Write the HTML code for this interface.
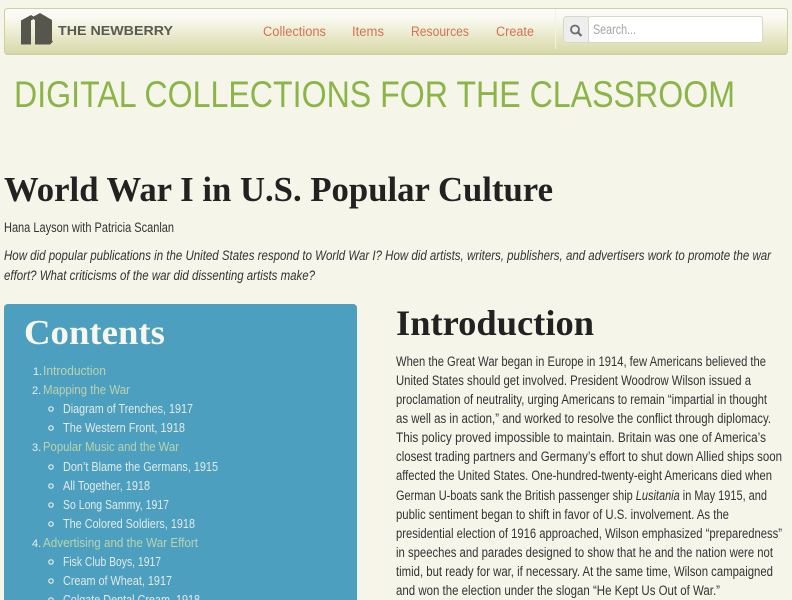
<!DOCTYPE html>
<html><head><meta charset="utf-8"><title>World War I in U.S. Popular Culture</title>
<style>
html,body{margin:0;padding:0;background:#f5f5ea;width:792px;height:600px;overflow:hidden}
svg{position:absolute;left:0;top:0;display:block}
text{font-family:"Liberation Sans",sans-serif;white-space:pre}
.b{font-size:13.5px;fill:#333}
.h{font-family:"Liberation Serif",serif;font-weight:bold}
.n{font-size:13.5px;fill:#d9714e}
.l{font-size:13px;fill:#bcd3ae}
.s{font-size:13px;fill:#e2ebe8}
.o{font-size:11px;fill:#e6eee8}
circle.u{fill:none;stroke:#e6eee8;stroke-width:1.2}
</style></head><body>
<svg width="792" height="600" viewBox="0 0 792 600">
<defs><linearGradient id="g" x1="0" y1="0" x2="0" y2="1"><stop offset="0" stop-color="#fdfdfa"/><stop offset=".2" stop-color="#fafaf2"/><stop offset="1" stop-color="#d8d8a6"/></linearGradient></defs>
<rect x="4.5" y="9" width="783" height="46" rx="3" fill="#c9c9b4"/>
<rect x="4.5" y="8.5" width="783" height="45.500" rx="3" fill="url(#g)" stroke="#cfd0a0"/>
<rect x="555" y="9" width="1" height="40" fill="#f3f3e2"/>
<path d="M21 20.500L31 15V44.500H21ZM31 15L33.500 16.500L40 13L52 20V40.500L53 41.500L50 44.500H35V20.500L33.500 19L31 20.500Z" fill="#57564d"/>
<text x="58" y="35" textLength="115" lengthAdjust="spacingAndGlyphs" style="font-size:13px;font-weight:bold;fill:#5a5a50">THE NEWBERRY</text>
<text class="n" x="263" y="36" textLength="63" lengthAdjust="spacingAndGlyphs">Collections</text>
<text class="n" x="352" y="36" textLength="32" lengthAdjust="spacingAndGlyphs">Items</text>
<text class="n" x="411" y="36" textLength="58" lengthAdjust="spacingAndGlyphs">Resources</text>
<text class="n" x="496" y="36" textLength="38" lengthAdjust="spacingAndGlyphs">Create</text>
<rect x="563.500" y="16.500" width="26" height="26" rx="3" fill="#eeeeee" stroke="#d8d8c8"/>
<rect x="588.500" y="16.500" width="174" height="26" rx="2" fill="#fff" stroke="#d8d8c8"/>
<circle cx="575" cy="29.500" r="4" fill="none" stroke="#6b6b6b" stroke-width="1.800"/>
<path d="M578 32.500L581.500 36" stroke="#6b6b6b" stroke-width="2.200" fill="none"/>
<text x="593" y="34" textLength="43" lengthAdjust="spacingAndGlyphs" style="font-size:13.500px;fill:#a5a5a5">Search...</text>

<text x="14" y="107" textLength="721" lengthAdjust="spacingAndGlyphs" style="font-size:37px;fill:#8cb548">DIGITAL COLLECTIONS FOR THE CLASSROOM</text>

<text class="h" x="4" y="201" textLength="549" lengthAdjust="spacingAndGlyphs" style="font-size:35px;fill:#222">World War I in U.S. Popular Culture</text>
<text class="b" x="4" y="232" textLength="170" lengthAdjust="spacingAndGlyphs">Hana Layson with Patricia Scanlan</text>
<text class="b" x="4" y="260" textLength="767" lengthAdjust="spacingAndGlyphs" font-style="italic">How did popular publications in the United States respond to World War I? How did artists, writers, publishers, and advertisers work to promote the war</text>
<text class="b" x="4" y="280" textLength="311" lengthAdjust="spacingAndGlyphs" font-style="italic">effort? What criticisms of the war did dissenting artists make?</text>

<rect x="4" y="304" width="353" height="300" rx="4" fill="#4c9fbe"/>
<text class="h" x="24" y="344" textLength="141" lengthAdjust="spacingAndGlyphs" style="font-size:35px;fill:#f7f7ee">Contents</text>
<text class="o" x="33" y="375">1.</text><text class="l" x="43" y="375" textLength="63" lengthAdjust="spacingAndGlyphs">Introduction</text>
<text class="o" x="32" y="394">2.</text><text class="l" x="43" y="394" textLength="87" lengthAdjust="spacingAndGlyphs">Mapping the War</text>
<circle class="u" cx="51" cy="409" r="2.200"/><text class="s" x="63" y="413" textLength="130" lengthAdjust="spacingAndGlyphs">Diagram of Trenches, 1917</text>
<circle class="u" cx="51" cy="428" r="2.200"/><text class="s" x="63" y="432" textLength="122" lengthAdjust="spacingAndGlyphs">The Western Front, 1918</text>
<text class="o" x="32" y="451">3.</text><text class="l" x="43" y="451" textLength="136" lengthAdjust="spacingAndGlyphs">Popular Music and the War</text>
<circle class="u" cx="51" cy="467" r="2.200"/><text class="s" x="63" y="471" textLength="155" lengthAdjust="spacingAndGlyphs">Don’t Blame the Germans, 1915</text>
<circle class="u" cx="51" cy="486" r="2.200"/><text class="s" x="63" y="490" textLength="87" lengthAdjust="spacingAndGlyphs">All Together, 1918</text>
<circle class="u" cx="51" cy="505" r="2.200"/><text class="s" x="63" y="509" textLength="106" lengthAdjust="spacingAndGlyphs">So Long Sammy, 1917</text>
<circle class="u" cx="51" cy="524" r="2.200"/><text class="s" x="63" y="528" textLength="132" lengthAdjust="spacingAndGlyphs">The Colored Soldiers, 1918</text>
<text class="o" x="32" y="547">4.</text><text class="l" x="43" y="547" textLength="155" lengthAdjust="spacingAndGlyphs">Advertising and the War Effort</text>
<circle class="u" cx="51" cy="562" r="2.200"/><text class="s" x="63" y="566" textLength="98" lengthAdjust="spacingAndGlyphs">Fisk Club Boys, 1917</text>
<circle class="u" cx="51" cy="581" r="2.200"/><text class="s" x="63" y="585" textLength="109" lengthAdjust="spacingAndGlyphs">Cream of Wheat, 1917</text>
<circle class="u" cx="51" cy="600" r="2.200"/><text class="s" x="63" y="604" textLength="137" lengthAdjust="spacingAndGlyphs">Colgate Dental Cream, 1918</text>

<text class="h" x="396" y="335" textLength="198" lengthAdjust="spacingAndGlyphs" style="font-size:36px;fill:#222">Introduction</text>
<text class="b" x="396" y="366" textLength="370" lengthAdjust="spacingAndGlyphs">When the Great War began in Europe in 1914, few Americans believed the</text>
<text class="b" x="396" y="385" textLength="355" lengthAdjust="spacingAndGlyphs">United States should get involved. President Woodrow Wilson issued a</text>
<text class="b" x="396" y="404" textLength="371" lengthAdjust="spacingAndGlyphs">proclamation of neutrality, urging Americans to remain “impartial in thought</text>
<text class="b" x="396" y="423" textLength="375" lengthAdjust="spacingAndGlyphs">as well as in action,” and worked to resolve the conflict through diplomacy.</text>
<text class="b" x="396" y="442" textLength="370" lengthAdjust="spacingAndGlyphs">This policy proved impossible to maintain. Britain was one of America’s</text>
<text class="b" x="396" y="461" textLength="386" lengthAdjust="spacingAndGlyphs">closest trading partners and Germany’s effort to shut down Allied ships soon</text>
<text class="b" x="396" y="480" textLength="376" lengthAdjust="spacingAndGlyphs">affected the United States. One-hundred-twenty-eight Americans died when</text>
<text class="b" x="396" y="500" textLength="371" lengthAdjust="spacingAndGlyphs">German U-boats sank the British passenger ship <tspan font-style="italic">Lusitania</tspan> in May 1915, and</text>
<text class="b" x="396" y="519" textLength="333" lengthAdjust="spacingAndGlyphs">public sentiment began to shift in favor of U.S. involvement. As the</text>
<text class="b" x="396" y="538" textLength="386" lengthAdjust="spacingAndGlyphs">presidential election of 1916 approached, Wilson emphasized “preparedness”</text>
<text class="b" x="396" y="557" textLength="377" lengthAdjust="spacingAndGlyphs">in speeches and parades designed to show that he and the nation were not</text>
<text class="b" x="396" y="576" textLength="377" lengthAdjust="spacingAndGlyphs">timid, but ready for war, if necessary. At the same time, Wilson campaigned</text>
<text class="b" x="396" y="595" textLength="324" lengthAdjust="spacingAndGlyphs">and won the election under the slogan “He Kept Us Out of War.”</text>
</svg>
</body></html>
